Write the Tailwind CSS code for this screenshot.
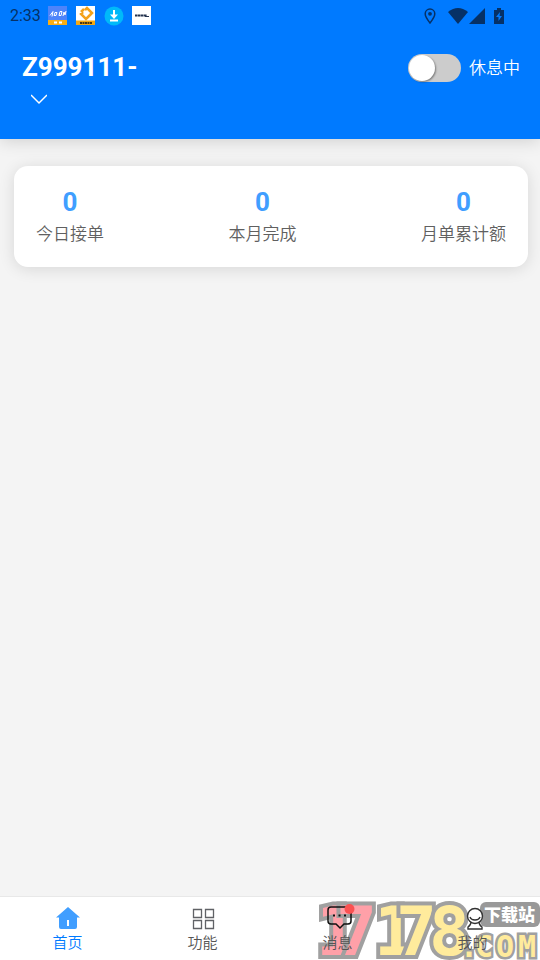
<!DOCTYPE html>
<html lang="zh-CN">
<head>
    <meta charset="UTF-8">
    <meta name="viewport" content="width=device-width, initial-scale=1.0">
    <title>首页</title>
    <script src="https://cdn.jsdelivr.net/npm/@tailwindcss/browser@4"></script>
</head>
<body class="min-h-screen flex flex-col bg-[#f4f4f4] font-['Roboto','Noto_Sans_CJK_SC',sans-serif]">
    <!-- Header -->
    <header class="bg-[#007aff] text-white pb-[33px] shadow-[0_2px_16px_rgba(0,0,0,0.15)]">
        <!-- Status bar -->
        <div class="h-[31px] pl-[10px] pr-[35px] flex items-center justify-between text-[#063166]">
            <div class="flex items-center gap-2">
                <span class="w-[30px] text-base leading-5">2:33</span>
                <svg class="w-5 h-5" viewBox="0 0 20 20">
                    <rect width="19" height="19" fill="#4d84fa"/>
                    <path d="M0 14h19v5H0z" fill="#f9ae13"/>
                    <path d="M2 9.500l3-4-1 5M6 9.500l1-3h2l-1 3zM11 9.500l1-4h2l-1 4zM15 10l1-4 1 3 1-4" fill="none" stroke="#fff"/>
                    <path d="M6 15.500h3v2H6zM11 15.500h3v2h-3z" fill="#fff"/>
                </svg>
                <svg class="w-5 h-5" viewBox="0 0 20 20">
                    <rect width="19" height="19" fill="#fff"/>
                    <path d="M0 14.500h19V19H0z" fill="#f4a914"/>
                    <path d="M9 4l2-2 5 5-2 2M12 11l-2 2-5-5 2-2M8 3L5 6M15 8l-3 3" fill="none" stroke="#f4a21b" stroke-width="2.500"/>
                    <path d="M4 17h12" stroke="#493715" stroke-width="2" stroke-dasharray="2 .5"/>
                </svg>
                <svg class="w-5 h-5" viewBox="0 0 20 20">
                    <circle cx="10" cy="10" r="9.500" fill="#00b9f9"/>
                    <path d="M10 4v7M6 14.500h8" stroke="#fff" stroke-width="2"/>
                    <path d="M6 8.500h8l-4 4.500z" fill="#fff"/>
                </svg>
                <svg class="w-5 h-5" viewBox="0 0 20 20">
                    <rect width="19" height="19" fill="#fff"/>
                    <path d="M3 9.500h12" stroke="#25344f" stroke-width="2" stroke-dasharray="2.500 .4"/>
                    <path d="M13 10.500h4" stroke="#25344f"/>
                </svg>
            </div>
            <div class="flex items-center">
                <svg class="w-3 h-4 mr-3" viewBox="0 0 12 16">
                    <path d="M6 1a4.800 4.800 0 0 0-4.800 4.800C1.200 9 6 15 6 15s4.800-6 4.800-9.200A4.800 4.800 0 0 0 6 1z" fill="none" stroke="currentColor" stroke-width="1.500"/>
                    <circle cx="6" cy="5.800" r="1.900" fill="currentColor"/>
                </svg>
                <svg class="w-5 h-4" viewBox="0 0 20 16"><path d="M0 4Q10-4 20 4L10 16z" fill="currentColor"/></svg>
                <svg class="w-4 h-4 ml-px mr-2" viewBox="0 0 16 16"><path d="M16 0v16H0z" fill="currentColor"/></svg>
                <svg class="w-3 h-4" viewBox="0 0 12 16">
                    <path d="M1 2h3V0h4v2h3v14H1z" fill="currentColor"/>
                    <path d="M7 4L3 9h2.500v4L9 8H6.500z" fill="#007aff"/>
                </svg>
            </div>
        </div>
        <div class="pl-[22px] pr-5 pt-5 flex items-start justify-between">
            <div>
                <h1 class="text-[26px] leading-8 font-bold">Z999111-</h1>
                <button class="block ml-2 mt-[9px] p-px" aria-label="展开">
                    <svg class="w-4 h-3" viewBox="0 0 16 12" fill="none" stroke="#fff" stroke-width="1.500"><path d="M0 2l8 8 8-8"/></svg>
                </button>
            </div>
            <label class="mt-[3px] flex items-center gap-2 text-[17px] leading-7 font-[350]">
                <span class="relative w-[53px] h-7">
                    <input type="checkbox" class="peer appearance-none block w-full h-full rounded-full bg-[#cccccc] checked:bg-[#4cd964]">
                    <span class="absolute left-px top-px w-[26px] h-[26px] rounded-full bg-white shadow-[1px_1px_2px_rgba(0,0,0,0.4)] pointer-events-none peer-checked:left-[26px]"></span>
                </span>
                休息中
            </label>
        </div>
    </header>

    <!-- Order totals -->
    <main class="flex-1 pt-[27px] pl-[14px] pr-3">
        <section class="bg-white rounded-[14px] px-[22px] pt-5 pb-[19px] flex justify-between text-center shadow-[0_2px_16px_rgba(0,0,0,0.12)]">
            <div>
                <p class="text-[26px] leading-8 font-bold text-[#409eff]">0</p>
                <p class="mt-0.5 text-[17px] leading-7 font-[350] text-[#606060]">今日接单</p>
            </div>
            <div>
                <p class="text-[26px] leading-8 font-bold text-[#409eff]">0</p>
                <p class="mt-0.5 text-[17px] leading-7 font-[350] text-[#606060]">本月完成</p>
            </div>
            <div>
                <p class="text-[26px] leading-8 font-bold text-[#409eff]">0</p>
                <p class="mt-0.5 text-[17px] leading-7 font-[350] text-[#606060]">月单累计额</p>
            </div>
        </section>
    </main>

    <!-- Tab bar -->
    <nav class="relative h-16 border-t border-[#e8e8e8] bg-white grid grid-cols-4 text-[15px] leading-5 font-[350] text-[#555555]">
        <!-- Site mark in the corner, behind the tabs -->
        <svg class="absolute right-0 bottom-0 w-56 h-[63px] pointer-events-none" viewBox="0 0 224 63" font-family="DejaVu Sans Mono, monospace" font-weight="bold" stroke="#a0a0a0" stroke-linejoin="miter" paint-order="stroke">
            <g font-size="68" stroke-width="8">
                <text x="0 20" y="58" fill="#ffa0a8">17</text>
                <text x="58 80 113" y="58" fill="#ffeb9c">178</text>
            </g>
            <text x="144 159 180 202" y="60" font-size="30" stroke-width="5" fill="#ffeb9c">.COM</text>
            <rect x="164" y="5" width="60" height="25" rx="6" fill="#999" stroke="none"/>
            <text x="168" y="24" font-size="17" font-family="Noto Sans CJK SC, sans-serif" font-weight="900" fill="#fff" stroke="none">下载站</text>
        </svg>
        <a href="#" class="relative flex flex-col items-center pt-2 text-[#007aff]">
            <svg class="w-7 h-7" viewBox="0 0 28 28">
                <path d="M14 2L2 12.500h3V22q0 2 2 2h14q2 0 2-2v-9.500h3z" fill="#409eff"/>
                <path d="M14 15v6" stroke="#fff" stroke-width="2"/>
            </svg>
            首页
        </a>
        <a href="#" class="relative flex flex-col items-center pt-2">
            <svg class="w-7 h-7" viewBox="0 0 28 28" fill="none" stroke="#606266" stroke-width="1.300">
                <path d="M4.500 4.500h8v8h-8zM16.500 4.500h8v8h-8zM4.500 15.500h8v8h-8zM16.500 15.500h8v8h-8z"/>
            </svg>
            功能
        </a>
        <a href="#" class="relative flex flex-col items-center pt-2">
            <svg class="w-7 h-7 overflow-visible" viewBox="0 0 28 28">
                <path d="M7 2h17q3 0 3 3v11q0 3-3 3h-4l-4 4-4-4H7q-3 0-3-3V5q0-3 3-3z" fill="none" stroke="#111" stroke-width="1.500"/>
                <path d="M9 10.500h2M14.500 10.500h2M20 10.500h2" stroke="#111" stroke-width="2"/>
                <circle cx="25.500" cy="4" r="5" fill="#fa5151"/>
            </svg>
            消息
        </a>
        <a href="#" class="relative flex flex-col items-center pt-2">
            <svg class="w-7 h-7" viewBox="0 0 28 28" fill="none" stroke="#333" stroke-width="1.400">
                <path d="M12 17q0 3-3 5v2h14v-2q-3-2-3-5" fill="#fff"/>
                <circle cx="16" cy="11" r="7.500" fill="#fff"/>
                <path d="M11 12q1 3 5 3t5-3"/>
            </svg>
            我的
        </a>
    </nav>
</body>
</html>
